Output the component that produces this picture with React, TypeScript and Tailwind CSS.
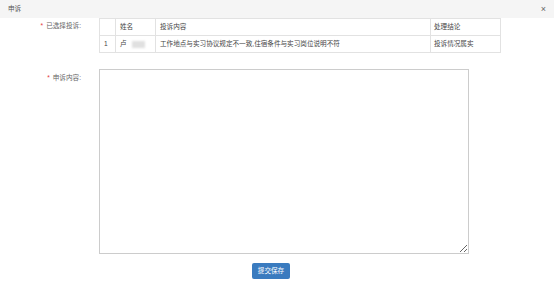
const rows = [
  {
    no: '1',
    name: '卢',
    content: '工作地点与实习协议规定不一致,住宿条件与实习岗位说明不符',
    result: '投诉情况属实',
  },
];

const App = () => {
  return (
    <div className="w-[554px] h-[288px] bg-white text-[6.6px] leading-none text-[#444] font-['Liberation_Sans','Noto_Sans_CJK_SC',sans-serif]">
      {/* Title bar */}
      <div className="h-[18px] bg-[#f5f5f5] flex items-center justify-between pl-[8px] pr-[8px]">
        <span className="text-[#555]">申诉</span>
        <span className="text-[9px] text-[#666] font-light leading-none">×</span>
      </div>

      {/* Selected complaints */}
      <div className="flex">
        <div className="w-[99px] pr-[18px] h-[17px] flex items-center justify-end text-[#666]">
          <span className="text-[#e4393c] mr-[3px]">*</span>
          已选择投诉:
        </div>
        <table className="w-[401px] border-collapse table-fixed">
          <colgroup>
            <col className="w-[16px]" />
            <col className="w-[40px]" />
            <col className="w-[275px]" />
            <col className="w-[70px]" />
          </colgroup>
          <thead>
            <tr className="h-[17px]">
              <th className="border border-[#e2e2e2] font-normal text-left px-[4px]"></th>
              <th className="border border-[#e2e2e2] font-normal text-left px-[4px]">姓名</th>
              <th className="border border-[#e2e2e2] font-normal text-left px-[4px]">投诉内容</th>
              <th className="border border-[#e2e2e2] font-normal text-left px-[3px]">处理结论</th>
            </tr>
          </thead>
          <tbody>
            {rows.map((r) => (
              <tr key={r.no} className="h-[17px]">
                <td className="border border-[#e2e2e2] px-[4px]">{r.no}</td>
                <td className="border border-[#e2e2e2] px-[4px]">
                  <span className="flex items-center">
                    {r.name}
                    <span className="ml-[5px] w-[13px] h-[7px] bg-[#e0e0e0] blur-[1px]" />
                  </span>
                </td>
                <td className="border border-[#e2e2e2] px-[4px] whitespace-nowrap">{r.content}</td>
                <td className="border border-[#e2e2e2] px-[3px]">{r.result}</td>
              </tr>
            ))}
          </tbody>
        </table>
      </div>

      {/* Appeal content */}
      <div className="flex mt-[16px]">
        <div className="w-[99px] pr-[18px] pt-[6px] flex justify-end text-[#666]">
          <span className="text-[#e4393c] mr-[3px]">*</span>
          申诉内容:
        </div>
        <textarea className="w-[370px] h-[185px] border border-[#ccc] outline-none" />
      </div>

      <div className="mt-[9px] pl-[252px]">
        <button className="w-[38px] h-[16px] bg-[#3a7bbf] text-white rounded-[2px] text-[6.6px]">
          提交保存
        </button>
      </div>
    </div>
  );
};

export default App;
